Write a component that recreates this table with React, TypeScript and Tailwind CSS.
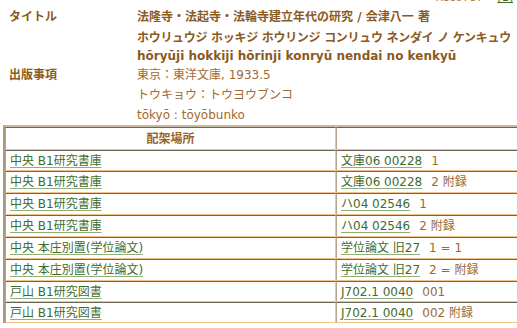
const FONT = '"DejaVu Sans", "Noto Sans CJK JP", sans-serif'

interface Holding {
  place: string
  call: string
  vol: string
  h: string
}

const HOLDINGS: Holding[] = [
  { place: '中央 B1研究書庫', call: '文庫06 00228', vol: '1', h: 'h-[21px]' },
  { place: '中央 B1研究書庫', call: '文庫06 00228', vol: '2 附録', h: 'h-[22px]' },
  { place: '中央 B1研究書庫', call: 'ハ04 02546', vol: '1', h: 'h-[22px]' },
  { place: '中央 B1研究書庫', call: 'ハ04 02546', vol: '2 附録', h: 'h-[22px]' },
  { place: '中央 本庄別置(学位論文)', call: '学位論文 旧27', vol: '1 = 1', h: 'h-[22px]' },
  { place: '中央 本庄別置(学位論文)', call: '学位論文 旧27', vol: '2 = 附録', h: 'h-[22px]' },
  { place: '戸山 B1研究図書', call: 'J702.1 0040', vol: '001', h: 'h-[21px]' },
  { place: '戸山 B1研究図書', call: 'J702.1 0040', vol: '002 附録', h: 'h-[21px]' },
]

const cell =
  'border-t border-t-[#6f6557] border-b border-b-[#f5c28c] border-l border-l-[#b8a68c] border-r border-r-[#f5c28c] px-[4px] py-0 align-middle'

function Link({ children }: { children: React.ReactNode }) {
  return (
    <a className="text-[#3f6b2c] underline decoration-[#8fb07e] underline-offset-[2px] cursor-pointer">
      {children}
    </a>
  )
}

export default function App() {
  return (
    <div className="w-[517px] h-[328px] overflow-hidden bg-white text-[12px]" style={{ fontFamily: FONT }}>
      {/* clipped line from above */}
      <div className="h-[7px] overflow-hidden flex justify-end gap-[14px] pr-[4px]">
        <span className="-mt-[10px] text-[#b07a3a] text-[11px]">Rec0787</span>
        <span className="-mt-[10px] text-[#3f6b2c] underline text-[11px]">[1]</span>
      </div>

      <div className="grid grid-cols-[128px_1fr] pl-[9px] font-bold text-[#8b5a1e]">
        <div className="h-[21px] leading-[21px]">タイトル</div>
        <div className="h-[21px] leading-[21px] whitespace-nowrap">法隆寺・法起寺・法輪寺建立年代の研究 / 会津八一 著</div>
        <div />
        <div className="h-[20px] leading-[20px] whitespace-nowrap tracking-[-0.3px]">
          ホウリュウジ ホッキジ ホウリンジ コンリュウ ネンダイ ノ ケンキュウ
        </div>
        <div />
        <div className="h-[17px] leading-[17px] whitespace-nowrap">hōryūji hokkiji hōrinji konryū nendai no kenkyū</div>

        <div className="h-[20px] leading-[20px]">出版事項</div>
        <div className="h-[20px] leading-[20px] font-normal text-[#a06a30]">東京：東洋文庫, 1933.5</div>
        <div />
        <div className="h-[20px] leading-[20px] font-normal text-[#a06a30]">トウキョウ：トウヨウブンコ</div>
        <div />
        <div className="h-[20px] leading-[20px] font-normal text-[#a06a30]">tōkyō : tōyōbunko</div>
      </div>

      <table className="ml-[3px] w-[540px] border-separate border-spacing-0 border-t-2 border-l-2 border-t-[#c9b99e] border-l-[#a8987e]">
        <thead>
          <tr className="h-[23px]">
            <th className={`${cell} w-[331px] text-center font-bold text-[#9a6428]`}>配架場所</th>
            <th className={cell} />
          </tr>
        </thead>
        <tbody>
          {HOLDINGS.map((r, i) => (
            <tr key={i} className={r.h}>
              <td className={`${cell} whitespace-nowrap`}>
                <Link>{r.place}</Link>
              </td>
              <td className={`${cell} whitespace-nowrap text-[#9a6a35]`}>
                <Link>{r.call}</Link>
                <span className="ml-[9px]">{r.vol}</span>
              </td>
            </tr>
          ))}
        </tbody>
      </table>
    </div>
  )
}
